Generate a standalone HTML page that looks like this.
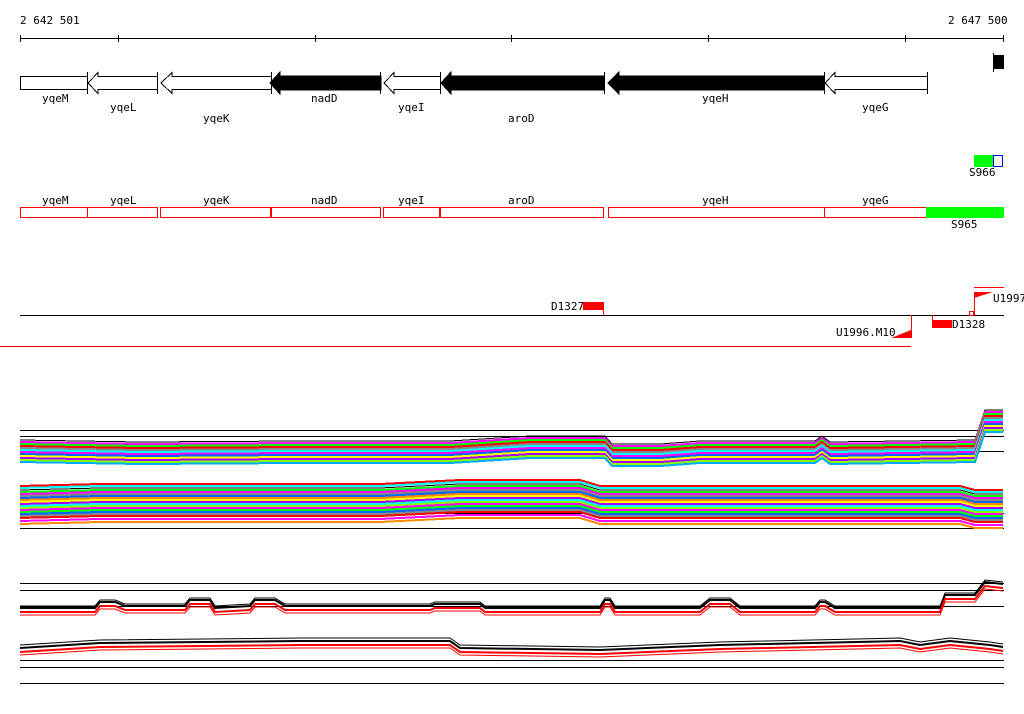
<!DOCTYPE html>
<html><head><meta charset="utf-8"><style>
html,body{margin:0;padding:0;background:#fff;}
svg{display:block}
text{font-family:"DejaVu Sans Mono","Liberation Mono",monospace;font-size:11px;fill:#000}
</style></head><body>
<svg width="1024" height="714" viewBox="0 0 1024 714" xmlns="http://www.w3.org/2000/svg" shape-rendering="crispEdges">
<defs>
<path id="b1" fill="none" d="M20 0 L140 2 L300 1 L450 1 L530 -4 L605 -4 L612 4 L660 4 L700 1 L815 1 L822 -4 L830 2 L975 0 L985 -30 L1003 -30"/>
<path id="b2" fill="none" d="M20 0 L100 -2 L380 -2 L460 -6 L580 -6 L600 0 L960 0 L975 4 L1003 4"/>
<path id="c1" fill="none" d="M20 0 L95 0 L100 -6 L115 -6 L125 -2 L185 -2 L190 -8 L210 -8 L215 0 L250 -2 L255 -8 L275 -8 L285 -2 L430 -2 L435 -4 L480 -4 L485 0 L600 0 L605 -8 L610 -8 L615 0 L700 0 L710 -8 L730 -8 L740 0 L815 0 L820 -6 L825 -6 L835 0 L940 0 L945 -13 L975 -13 L985 -26 L1003 -24"/>
<path id="c2" fill="none" d="M20 0 L100 -5 L300 -7 L450 -7 L460 0 L600 2 L720 -3 L900 -7 L920 -3 L950 -7 L990 -3 L1003 -1"/>
</defs>
<!-- axis -->
<text x="20" y="24">2 642 501</text>
<text x="948" y="24">2 647 500</text>
<g stroke="#000" stroke-width="1">
<line x1="20" y1="38.5" x2="1004" y2="38.5"/>
<line x1="20.5" y1="35" x2="20.5" y2="42"/><line x1="118.5" y1="35" x2="118.5" y2="42"/><line x1="315.5" y1="35" x2="315.5" y2="42"/><line x1="511.5" y1="35" x2="511.5" y2="42"/><line x1="708.5" y1="35" x2="708.5" y2="42"/><line x1="905.5" y1="35" x2="905.5" y2="42"/><line x1="1003.5" y1="35" x2="1003.5" y2="42"/>
</g>
<!-- genes -->
<g stroke="#000" stroke-width="1">
<rect x="20.5" y="76.5" width="67" height="13" fill="#fff"/>
<polygon points="157.5,76.5 98,76.5 98,72.5 88,83 98,93.5 98,89.5 157.5,89.5" fill="#fff"/>
<line x1="87.5" y1="72" x2="87.5" y2="94"/><line x1="157.5" y1="72" x2="157.5" y2="94"/>
<polygon points="271.5,76.5 172,76.5 172,72.5 161,83 172,93.5 172,89.5 271.5,89.5" fill="#fff"/>
<polygon points="381,76 280,76 280,72 270,83 280,94 280,90 381,90" fill="#000"/>
<line x1="271.5" y1="72" x2="271.5" y2="94"/><line x1="380.5" y1="72" x2="380.5" y2="94"/>
<polygon points="440.5,76.5 394,76.5 394,72.5 384,83 394,93.5 394,89.5 440.5,89.5" fill="#fff"/>
<polygon points="604,76 451,76 451,72 441,83 451,94 451,90 604,90" fill="#000"/>
<line x1="440.5" y1="72" x2="440.5" y2="94"/><line x1="604.5" y1="72" x2="604.5" y2="94"/>
<polygon points="824,76 619,76 619,72 608,83 619,94 619,90 824,90" fill="#000"/>
<polygon points="927.5,76.5 835,76.5 835,72.5 825,83 835,93.5 835,89.5 927.5,89.5" fill="#fff"/>
<line x1="824.5" y1="72" x2="824.5" y2="94"/><line x1="927.5" y1="72" x2="927.5" y2="94"/>
<rect x="993" y="55" width="11" height="14" fill="#000" stroke="none"/>
<line x1="993.5" y1="53" x2="993.5" y2="72"/>
</g>
<text x="42" y="102">yqeM</text><text x="110" y="111">yqeL</text><text x="203" y="122">yqeK</text>
<text x="311" y="102">nadD</text><text x="398" y="111">yqeI</text><text x="508" y="122">aroD</text>
<text x="702" y="102">yqeH</text><text x="862" y="111">yqeG</text>
<!-- S966 -->
<rect x="974" y="155" width="19" height="12" fill="#0f0"/>
<rect x="993.5" y="155.5" width="9" height="11" fill="#fff" stroke="#00f"/>
<text x="969" y="176">S966</text>
<!-- red boxes -->
<text x="42" y="204">yqeM</text><text x="110" y="204">yqeL</text><text x="203" y="204">yqeK</text>
<text x="311" y="204">nadD</text><text x="398" y="204">yqeI</text><text x="508" y="204">aroD</text>
<text x="702" y="204">yqeH</text><text x="862" y="204">yqeG</text>
<g stroke="#f00" fill="none" stroke-width="1">
<rect x="20.5" y="207.5" width="67" height="10"/><rect x="87.5" y="207.5" width="70" height="10"/>
<rect x="160.5" y="207.5" width="110" height="10"/><rect x="271.5" y="207.5" width="109" height="10"/>
<rect x="383.5" y="207.5" width="56" height="10"/><rect x="440.5" y="207.5" width="163" height="10"/>
<rect x="608.5" y="207.5" width="216" height="10"/><rect x="824.5" y="207.5" width="102" height="10"/>
</g>
<rect x="926" y="207" width="78" height="11" fill="#0f0"/>
<text x="951" y="228">S965</text>
<!-- bottom track -->
<line x1="20" y1="315.5" x2="1004" y2="315.5" stroke="#000"/>
<rect x="583" y="302" width="20" height="8" fill="#f00"/>
<line x1="603.5" y1="302" x2="603.5" y2="315" stroke="#f00"/>
<text x="551" y="310">D1327</text>
<line x1="974" y1="287.5" x2="1004" y2="287.5" stroke="#f00"/>
<polygon points="974,292 993,292 974,298" fill="#f00"/>
<line x1="974.5" y1="292" x2="974.5" y2="315" stroke="#f00"/>
<rect x="969.5" y="311.5" width="4" height="4" fill="none" stroke="#f00"/>
<text x="993" y="302">U1997</text>
<rect x="932" y="320" width="20" height="8" fill="#f00"/>
<line x1="932.5" y1="315" x2="932.5" y2="320" stroke="#f00"/>
<text x="952" y="328">D1328</text>
<line x1="911.5" y1="315" x2="911.5" y2="338" stroke="#f00"/>
<polygon points="891,338 911,338 911,330" fill="#f00"/>
<line x1="0" y1="346.5" x2="911" y2="346.5" stroke="#f00"/>
<text x="836" y="336">U1996.M10</text>
<!-- graph 1 -->
<g stroke="#000"><line x1="20" y1="430.5" x2="1004" y2="430.5"/><line x1="20" y1="436.5" x2="1004" y2="436.5"/><line x1="20" y1="451.5" x2="1004" y2="451.5"/><line x1="20" y1="513.5" x2="1004" y2="513.5"/><line x1="20" y1="528.5" x2="1004" y2="528.5"/></g>
<g stroke-width="2">
<use href="#b1" y="440" stroke="#000" stroke-width="1"/>
<use href="#b1" y="442" stroke="#f0f"/><use href="#b1" y="444" stroke="#0f0"/><use href="#b1" y="446" stroke="#f00"/>
<use href="#b1" y="448" stroke="#888"/><use href="#b1" y="450" stroke="#0ff"/><use href="#b1" y="452" stroke="#f0f"/>
<use href="#b1" y="454" stroke="#06f"/><use href="#b1" y="456" stroke="#ff0"/><use href="#b1" y="458" stroke="#a0f"/>
<use href="#b1" y="460" stroke="#8f0"/><use href="#b1" y="462" stroke="#0af"/>
<use href="#b2" y="486" stroke="#f00"/><use href="#b2" y="488" stroke="#0ff"/><use href="#b2" y="490" stroke="#000" stroke-width="1"/>
<use href="#b2" y="492" stroke="#0f0"/><use href="#b2" y="494" stroke="#f0f"/><use href="#b2" y="496" stroke="#888"/>
<use href="#b2" y="498" stroke="#06f"/><use href="#b2" y="500" stroke="#f80"/><use href="#b2" y="502" stroke="#ff0"/>
<use href="#b2" y="504" stroke="#a0f"/><use href="#b2" y="506" stroke="#0ff"/><use href="#b2" y="508" stroke="#8f0"/>
<use href="#b2" y="510" stroke="#f0f"/><use href="#b2" y="512" stroke="#0f0"/><use href="#b2" y="514" stroke="#06f"/>
<use href="#b2" y="516" stroke="#888"/><use href="#b2" y="518" stroke="#f00"/><use href="#b2" y="521" stroke="#f0f"/><use href="#b2" y="524" stroke="#f80"/>
</g>
<!-- graph 2 -->
<g stroke="#000"><line x1="20" y1="583.5" x2="1004" y2="583.5"/><line x1="20" y1="590.5" x2="1004" y2="590.5"/><line x1="20" y1="606.5" x2="1004" y2="606.5"/><line x1="20" y1="660.5" x2="1004" y2="660.5"/><line x1="20" y1="667.5" x2="1004" y2="667.5"/><line x1="20" y1="683.5" x2="1004" y2="683.5"/></g>
<g shape-rendering="auto">
<use href="#c1" y="608" stroke="#000" stroke-width="2"/><use href="#c1" y="606" stroke="#000" stroke-width="1"/>
<use href="#c1" y="612" stroke="#f00" stroke-width="2"/><use href="#c1" y="615" stroke="#f00" stroke-width="1"/>
<use href="#c2" y="645" stroke="#000" stroke-width="1"/><use href="#c2" y="648" stroke="#000" stroke-width="2"/>
<use href="#c2" y="652" stroke="#f00" stroke-width="2"/><use href="#c2" y="655" stroke="#f00" stroke-width="1"/>
</g>
</svg>
</body></html>
